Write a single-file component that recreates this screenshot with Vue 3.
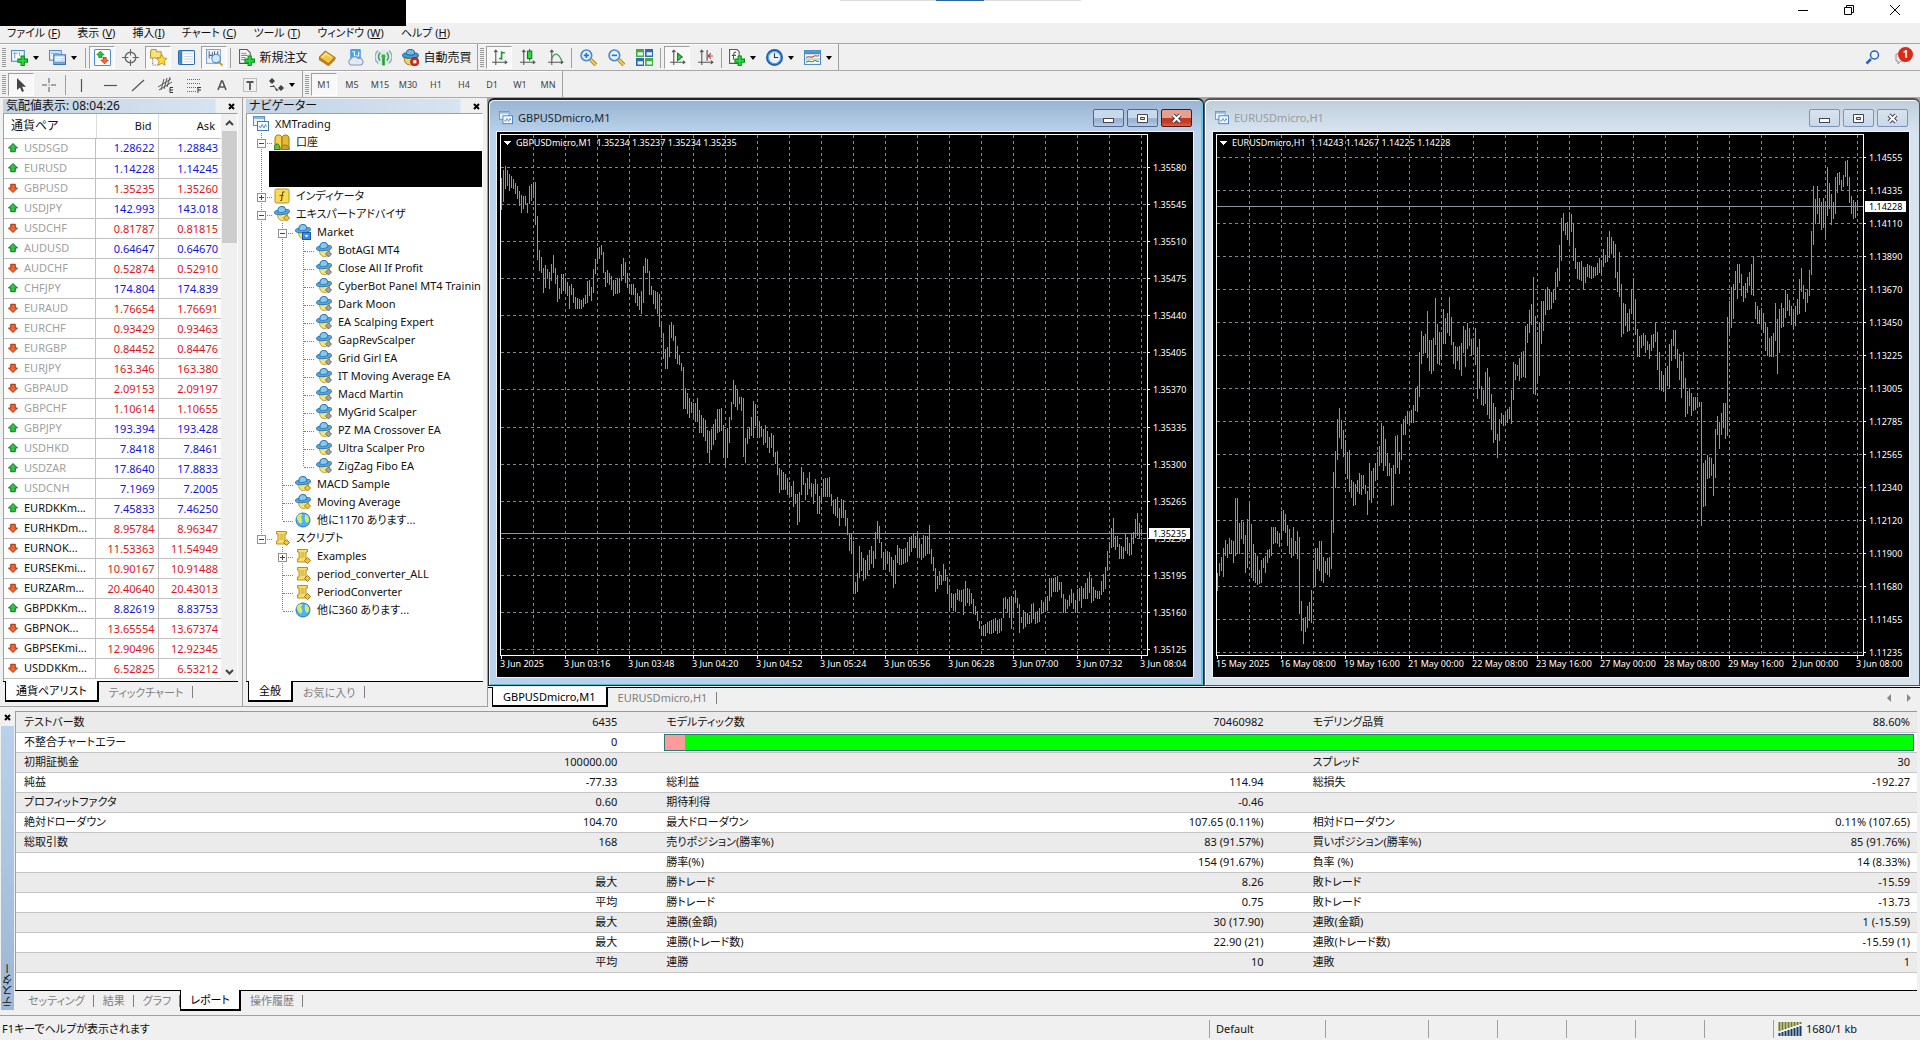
<script setup>
const menus = [
  ['ファイル (', 'F', ')'], ['表示 (', 'V', ')'], ['挿入(', 'I', ')'], ['チャート (', 'C', ')'],
  ['ツール (', 'T', ')'], ['ウィンドウ (', 'W', ')'], ['ヘルプ (', 'H', ')'],
]

const saucer = (gem, edge) => `<path d="M3.500 8c0 4 1.500 6.500 5 6.500s5-3 5-6.500z" fill="#f4e27a" stroke="#b89a2c"/><g transform="rotate(-6 8 6)"><ellipse cx="8" cy="6" rx="7.500" ry="2.500" fill="#5aa9dc" stroke="#2c78b4"/><path d="M4 5.500C4 2 6 .5 8 .5s4 1.500 4 5c-2 1-6 1-8 0z" fill="#86c8ee" stroke="#2c78b4"/></g><path d="M12.500 9l3 3-3 3-3-3z" fill="${gem}" stroke="${edge}"/>`
const axes = '<path d="M4.500 1v14M1 12.500h14M3 3l1.500-2L6 3M13 11l2 1.500-2 1.500" fill="none" stroke="#555"/>'
const plus = '<path d="M9.500 6.500h3v3h3v3h-3v3h-3v-3h-3v-3h3z" fill="#1fe03a" stroke="#0a8a1c"/>'
const lens = '<path d="M10 10l5 5" stroke="#a87a10" stroke-width="3.500"/><path d="M10 10l5 5" stroke="#f2cf52" stroke-width="2"/><circle cx="6" cy="6" r="5" fill="#e3f1fc" stroke="#4489cc" stroke-width="1.500"/>'

const icons = {
  newChart: `<rect x=".5" y="1.500" width="12" height="10" fill="#f4f9ff" stroke="#4a86c0"/><path d="M2 4h4M3.500 3v6M8 3v3" stroke="#7aa9d6"/>${plus}`,
  profiles: '<rect x=".5" y="1.500" width="11" height="9" fill="#eaf4ff" stroke="#4a86c0"/><rect x="4.500" y="5.500" width="11" height="9" fill="#cfe3f7" stroke="#2f6fb2"/><path d="M2 4h8" stroke="#6fa2d4"/><path d="M5 13h10" stroke="#6fa2d4" stroke-width="2"/><path d="M6 8h7M6 10h5" stroke="#fff"/>',
  market: '<rect x=".5" y=".5" width="15" height="15" rx="1" fill="#fff" stroke="#4a90d0"/><path d="M6 2l3.500 3.500H7.500V8h-3V5.500h-2z" fill="#27c93a" stroke="#0c7d1b" stroke-width=".7"/><path d="M10 14l-3.500-3.500h2V8h3v2.500h2z" fill="#f46a34" stroke="#b1310c" stroke-width=".7"/>',
  cross: '<circle cx="8" cy="8" r="5" fill="none" stroke="#666" stroke-width="1.300"/><path d="M8 0v6M8 10v6M0 8h6M10 8h6" stroke="#666"/>',
  navigator: '<path d="M.5 2.500l1-2h4l1 2h4v6h-10z" fill="#f7e27c" stroke="#b9972a"/><path d="M2.500 9v6h5" fill="none" stroke="#777" stroke-dasharray="1 1"/><path d="M11 5l1.600 3.400 3.400.5-2.500 2.500.7 3.800L11 13.500 7.800 15.200l.7-3.800L6 8.900l3.400-.5z" fill="#ffd83c" stroke="#b98a1a" stroke-width=".8"/>',
  terminal: '<rect x=".5" y="1.500" width="15" height="13" rx="1" fill="#fff" stroke="#2c6cb0"/><rect x="1" y="2" width="3" height="12" fill="#3d84cc"/><path d="M6 4.500h8M6 7h8M6 9.500h8M6 12h8" stroke="#c6d9ee"/>',
  tester: '<rect x=".5" y=".5" width="13" height="13" fill="#eef5fc" stroke="#7ea6cd"/><path d="M3 2v7M3 6h3M6 3v5M8 2v4M11 2v5" stroke="#667"/><path d="M12 12l3.500 3.500" stroke="#d2a327" stroke-width="2"/><circle cx="9.500" cy="9" r="4" fill="#cfe6fb" fill-opacity=".85" stroke="#4489cc"/>',
  order: `<path d="M1.500.5h7l3 3v10h-10z" fill="#fff" stroke="#555"/><path d="M3 4h5M3 6h6M3 8h4M3 10h3" stroke="#888"/>${plus}`,
  gold: '<path d="M0 8l6-6 9 6-6 6z" fill="#f2c544" stroke="#a9761a"/><path d="M0 8v2l9 6 6-6V8l-6 6z" fill="#c98a22" stroke="#9a6412" stroke-width=".6"/><path d="M3 8l3.500-3.500L11 7.500" fill="none" stroke="#ffe998"/>',
  cloud: '<rect x="3" y="0" width="10" height="10" rx="1" fill="#45a3ea"/><path d="M5 2.500h2v4h4v-4" stroke="#fff" fill="none"/><path d="M3.500 15a3 3 0 010-5.500 4 4 0 017-.5 3 3 0 012.500 6z" fill="#e2e9f5" stroke="#8697bb"/>',
  signal: '<circle cx="8" cy="8" r="7.500" fill="#dfe9ef"/><path d="M8 8v7.500" stroke="#26a32d" stroke-width="2.500"/><circle cx="8" cy="7" r="2" fill="#3bb44a"/><path d="M5 11a5 5 0 010-7.500M11 11a5 5 0 000-7.500" fill="none" stroke="#3fa854" stroke-width="1.500"/><path d="M3 13.500a7.500 7.500 0 010-12M13 13.500a7.500 7.500 0 000-12" fill="none" stroke="#8fb3c6" stroke-width="1.300"/>',
  auto: '<path d="M2 8c0 4 2 7 6 7s6-3 6-7z" fill="#f4d35a" stroke="#b08a22"/><ellipse cx="8" cy="6" rx="7.500" ry="2.700" fill="#4d9bd3" stroke="#2a6fa5"/><path d="M4 5c0-3 2-4.500 4-4.500S12 2 12 5c-2 1-6 1-8 0z" fill="#74bbe6" stroke="#2a6fa5"/><circle cx="12" cy="12" r="4" fill="#d8281a" stroke="#8e1208" stroke-width=".6"/><rect x="10.500" y="10.500" width="3" height="3" fill="#fff"/>',
  bars: `${axes}<path d="M10 2v8M10 3.500h3M7.500 9h2.500" stroke="#1c9c2a" stroke-width="1.500" fill="none"/>`,
  candles: `${axes}<path d="M10 0v11" stroke="#0a7d18"/><rect x="8" y="2" width="4" height="7" fill="#2fd646" stroke="#0a7d18"/>`,
  line: `${axes}<path d="M4 10c3-7 6-7 10 1" stroke="#3fa34a" fill="none" stroke-width="1.300"/>`,
  zoomIn: `${lens}<path d="M3.500 6h5M6 3.500v5" stroke="#2f74bb" stroke-width="1.500"/>`,
  zoomOut: `${lens}<path d="M3.500 6h5" stroke="#2f74bb" stroke-width="1.500"/>`,
  tile: '<rect x="0" y="0" width="7.500" height="7.500" fill="#3fae3a"/><rect x="8.500" y="0" width="7.500" height="7.500" fill="#2d68b8"/><rect x="0" y="8.500" width="7.500" height="7.500" fill="#2d68b8"/><rect x="8.500" y="8.500" width="7.500" height="7.500" fill="#3fae3a"/><path d="M1.500 4.500h5M10 4.500h5M1.500 13h5M10 13h5" stroke="#e9f4ff" stroke-width="3"/>',
  scroll: `${axes}<path d="M8 4l4.500 3.500L8 11z" fill="#3ccc48" stroke="#138022"/>`,
  shift: `${axes}<path d="M9.500 1v10" stroke="#444"/><path d="M15 6.500h-4M13 4l-2.500 2.500L13 9" stroke="#b8321e" fill="none"/>`,
  indicator: `<path d="M1.500.5h7l2 2v11h-9z" fill="#fff" stroke="#555"/><path d="M7.500 3C5 2.500 5.500 5 5 10M3.500 6h4" stroke="#555" fill="none"/>${plus}`,
  clock: '<circle cx="8" cy="8" r="6.800" fill="#eaf4ff" stroke="#1f5fae" stroke-width="2.400"/><circle cx="8" cy="8" r="5.800" fill="none" stroke="#5aa2e6" stroke-width="1.200"/><path d="M8 4v4h3.500" stroke="#333" fill="none"/>',
  template: '<rect x=".5" y="1.500" width="15" height="13" fill="#fff" stroke="#4a86c0"/><rect x="1" y="2" width="14" height="3" fill="#4a90d6"/><path d="M2 8c3-2 5 1 7-1s3 1 5-1" stroke="#c23a20" fill="none"/><path d="M1 9.500h14" stroke="#9bb" /><path d="M2 12.500c3-3 5 1 7-1s3 1 5 0" stroke="#2a9a38" fill="none"/>',
  pointer: '<path d="M4 1v12l3-2.500L9 15l2-1-2-4.200h4z" fill="#444"/>',
  plusThin: '<path d="M8 1v5M8 10v5M1 8h5M10 8h5" stroke="#555"/><rect x="7.500" y="7.500" width="1" height="1" fill="#555"/>',
  vline: '<path d="M7.500 2v13" stroke="#555" stroke-width="1.200"/>',
  hline: '<path d="M2 8.500h13" stroke="#555" stroke-width="1.200"/>',
  trend: '<path d="M2 14L14 3" stroke="#555" stroke-width="1.200"/>',
  channel: '<path d="M0 10L13 2M1 13l13-8M3 13l3-11M6 12l3-11M9 10l3-10" stroke="#555" fill="none"/><path d="M15 10.500h-3v5h3M12 13h3" stroke="#333" fill="none"/>',
  fibo: '<path d="M1 2.500h13M1 6.500h13M1 10.500h13M1 14.500h9" stroke="#666" stroke-dasharray="1 1"/><path d="M15 10.500h-3V16M12 13h3" stroke="#333" fill="none"/>',
  letter: '<path d="M4 13L7.500 4h1L12 13M5.500 10h5" stroke="#555" stroke-width="1.600" fill="none"/>',
  label: '<rect x="1.500" y="1.500" width="13" height="13" fill="none" stroke="#888" stroke-dasharray="1 1"/><path d="M4.500 5h7M8 5v8" stroke="#555" stroke-width="1.800"/>',
  shapes: '<path d="M4 1l3 3-3 3-3-3z" fill="#444"/><path d="M5 8l4 5M2 9.500h4" stroke="#444"/><path d="M13 8l3 3-3 3-3-3z" fill="#444"/><path d="M7 11l1 3 3-1z" fill="#444"/>',
  windows: '<rect x=".5" y=".5" width="11" height="9" fill="#eaf4ff" stroke="#5b93cb"/><path d="M1 2h10" stroke="#8fb7df" stroke-width="2"/><rect x="4.500" y="5.500" width="11" height="9" fill="#f6faff" stroke="#3e7bbb"/><path d="M6 10l1.500 2L9 8.500l2 3.500 1.500-3.500 1 2" fill="none" stroke="#5b8fc5"/>',
  people: '<path d="M1 15V4c0-4 7-4 7 0v11z" fill="#f6d24a" stroke="#94771a"/><path d="M8 14V4c0-4 7-4 7 0v11z" fill="#e6ba34" stroke="#94771a"/><path d="M0 15.500C0 8 6 8 6 15.500z" fill="#59c043" stroke="#2b7d1c"/><path d="M7 15.500c0-6 8-6 8.500 0z" fill="#c9a02a" stroke="#94771a"/>',
  func: '<rect x="1" y="1" width="14" height="14" rx="1.500" fill="#f9dc53" stroke="#b8912a"/><path d="M10.500 4C8 3.500 8.500 6 7.500 12.500H6M5.500 7.500h4" stroke="#6b5310" fill="none" stroke-width="1.200"/>',
  ea: saucer('#f3c33a', '#a87a14'),
  eaGray: saucer('#a2a2a2', '#6c6c6c'),
  eaMarket: saucer('#5aa9dc', '#2c78b4') + '<rect x="7.500" y="8.500" width="8" height="7" fill="#3c8be0" stroke="#1c5ba8"/><path d="M9.500 11l2 2.500 2-2.500z" fill="#fff"/>',
  globe: '<circle cx="8" cy="8" r="7" fill="#4fb2ee" stroke="#2a78b8"/><path d="M2.500 4c2-3 5-2 5-1s-2 1-1 3 1 3 0 5-3-1-4-3-1-3 0-4zM10 2.500c3 0 4.500 4 4 6S11 12 10.500 9 9 6 10 5z" fill="#d4ec6a"/>',
  script: '<path d="M2.500 1.500h10V4H11v7h1.500v3h-10v-3H4V4H2.500z" fill="#f8dd66" stroke="#b58f25"/><path d="M5.500 5h4M5.500 7h4M5.500 9h4" stroke="#c9a53a"/><path d="M12.500 9.500l3 3-3 3-3-3z" fill="#f3c33a" stroke="#a87a14"/>',
  up: '<path d="M8 2l6 6h-3v5H5V8H2z" fill="#2fc344" stroke="#0c6e1c" stroke-width="1.300"/>',
  down: '<path d="M8 14l6-6h-3V3H5v5H2z" fill="#f4652f" stroke="#9c2f0c" stroke-width="1.300"/>',
}

const barA = [
  { i: 'newChart', d: 1 }, { i: 'profiles', d: 1 }, { s: 1 },
  { i: 'market', p: 1 }, { i: 'cross' }, { i: 'navigator', p: 1 }, { i: 'terminal' }, { i: 'tester', p: 1 }, { s: 1 },
  { i: 'order', t: '新規注文' }, { i: 'gold' }, { i: 'cloud' }, { i: 'signal' }, { i: 'auto', t: '自動売買' },
]
const barB = [
  { i: 'bars', p: 1 }, { i: 'candles' }, { i: 'line' }, { s: 1 },
  { i: 'zoomIn' }, { i: 'zoomOut' }, { i: 'tile' }, { s: 1 },
  { i: 'scroll', p: 1 }, { i: 'shift' }, { s: 1 },
  { i: 'indicator', d: 1 }, { i: 'clock', d: 1 }, { i: 'template', d: 1 },
]
const barC = [
  { i: 'pointer', p: 1 }, { i: 'plusThin' }, { s: 1 },
  { i: 'vline' }, { i: 'hline' }, { i: 'trend' }, { i: 'channel' }, { i: 'fibo' }, { i: 'letter' }, { i: 'label' }, { i: 'shapes', d: 1 },
]
const frames = ['M1', 'M5', 'M15', 'M30', 'H1', 'H4', 'D1', 'W1', 'MN']

const quotes = `USDSGD u 1.28622 1.28843 g
EURUSD u 1.14228 1.14245 g
GBPUSD d 1.35235 1.35260 g
USDJPY u 142.993 143.018 g
USDCHF d 0.81787 0.81815 g
AUDUSD u 0.64647 0.64670 g
AUDCHF d 0.52874 0.52910 g
CHFJPY u 174.804 174.839 g
EURAUD d 1.76654 1.76691 g
EURCHF d 0.93429 0.93463 g
EURGBP d 0.84452 0.84476 g
EURJPY d 163.346 163.380 g
GBPAUD d 2.09153 2.09197 g
GBPCHF d 1.10614 1.10655 g
GBPJPY u 193.394 193.428 g
USDHKD u 7.8418 7.8461 g
USDZAR u 17.8640 17.8833 g
USDCNH u 7.1969 7.2005 g
EURDKKm... u 7.45833 7.46250
EURHKDm... d 8.95784 8.96347
EURNOK... d 11.53363 11.54949
EURSEKmi... d 10.90167 10.91488
EURZARm... d 20.40640 20.43013
GBPDKKm... u 8.82619 8.83753
GBPNOK... d 13.65554 13.67374
GBPSEKmi... d 12.90496 12.92345
USDDKKm... d 6.52825 6.53212`.split('\n').map((l) => {
  const [name, dir, bid, ask, gray] = l.split(' ')
  return { name, up: dir === 'u', bid, ask, gray: !!gray }
})

/* guide cells: | line, T branch, L last branch, - open node, + closed node, e open last */
const ea = (name) => ({ g: '||T', i: 'eaGray', t: name })
const treeTop = [
  { g: '', i: 'windows', t: 'XMTrading' },
  { g: '-', i: 'people', t: '口座' },
]
const treeRest = [
  { g: '+', i: 'func', t: 'インディケータ' },
  { g: '-', i: 'ea', t: 'エキスパートアドバイザ' },
  { g: '|-', i: 'eaMarket', t: 'Market' },
  ea('BotAGI MT4'), ea('Close All If Profit'), ea('CyberBot Panel MT4 Trainin'), ea('Dark Moon'),
  ea('EA Scalping Expert'), ea('GapRevScalper'), ea('Grid Girl EA'), ea('IT Moving Average EA'),
  ea('Macd Martin'), ea('MyGrid Scalper'), ea('PZ MA Crossover EA'), ea('Ultra Scalper Pro'),
  { g: '||L', i: 'eaGray', t: 'ZigZag Fibo EA' },
  { g: '|T', i: 'ea', t: 'MACD Sample' },
  { g: '|T', i: 'ea', t: 'Moving Average' },
  { g: '|L', i: 'globe', t: '他に1170 あります...' },
  { g: 'e', i: 'script', t: 'スクリプト' },
  { g: ' +', i: 'script', t: 'Examples' },
  { g: ' T', i: 'script', t: 'period_converter_ALL' },
  { g: ' T', i: 'script', t: 'PeriodConverter' },
  { g: ' L', i: 'globe', t: '他に360 あります...' },
]
const cellClass = {
  '|': 'v', T: 'v h', L: 'half h', '-': 'v h box', '+': 'v h box plus', e: 'half h box', ' ': '',
}

/* range bars: x, high, low in plot pixels */
const gbp = `1,44,75;4,32,63;6,32,44;8,39,58;10,41,53;13,45,54;17,52,64;21,61,78;25,62,69;27,69,78;29,52,69;33,48,62;35,48,90;37,82,125;39,116,136;41,123,138;43,134,158;45,131,153;47,135,144;49,138,154;53,121,138;55,134,149;57,141,167;59,154,164;61,140,159;63,140,156;65,144,158;67,148,161;69,152,174;71,150,160;73,154,168;75,163,174;81,166,174;85,161,169;87,147,168;89,146,161;91,153,166;93,135,158;95,125,139;97,114,128;101,111,120;103,118,138;105,138,152;107,136,148;109,139,150;111,142,155;113,146,161;115,146,159;119,144,158;121,130,146;123,124,141;125,128,148;127,139,153;129,150,159;133,150,160;135,154,168;137,159,171;139,162,175;141,157,179;143,132,168;145,124,138;147,125,138;149,137,160;151,152,160;153,156,169;157,158,179;159,160,192;161,190,203;163,199,224;165,215,234;167,213,234;169,191,222;171,188,203;173,191,206;175,202,224;177,212,229;179,221,230;181,229,236;183,233,274;185,254,274;189,264,283;191,268,278;195,269,287;197,264,287;199,276,298;201,281,298;205,286,306;207,296,318;209,297,328;211,295,315;215,285,305;217,275,298;221,274,296;223,291,323;225,297,330;227,294,323;229,283,308;231,268,285;233,246,269;235,251,272;237,256,275;239,263,269;241,263,276;243,264,322;245,304,328;247,295,309;249,293,304;251,283,301;253,267,303;255,270,291;257,282,303;261,292,302;263,295,310;265,291,308;269,303,318;271,299,313;273,301,322;275,318,329;277,317,340;279,334,358;281,336,355;285,340,355;287,344,360;291,352,362;293,347,372;295,360,369;297,360,390;299,358,387;301,333,360;303,338,350;305,349,365;309,338,354;311,349,362;313,350,369;315,345,359;317,350,379;319,362,379;321,354,369;323,345,362;329,343,362;331,360,371;333,366,379;337,363,383;339,374,391;341,365,383;343,366,383;345,376,391;347,384,400;349,399,416;351,400,419;353,407,459;355,448,459;357,439,457;359,412,443;361,418,436;363,424,446;365,426,444;369,416,435;371,412,429;373,417,433;375,398,424;377,387,404;379,392,408;381,408,423;383,418,435;387,417,429;389,418,437;391,423,441;393,426,453;395,421,449;397,411,428;399,414,430;403,415,429;405,414,428;407,408,427;409,403,421;413,400,413;415,402,413;417,400,421;419,404,423;421,410,425;423,401,423;427,402,419;429,391,419;431,415,429;433,423,436;435,434,457;437,442,454;439,437,450;441,441,450;443,430,446;445,435,446;447,443,459;449,454,476;451,459,473;453,460,476;455,459,477;457,455,465;461,456,467;463,455,480;465,447,471;467,454,468;469,455,471;471,459,469;473,465,479;475,472,480;477,477,486;479,487,494;481,492,500;485,490,501;487,488,498;489,487,499;493,485,498;495,484,496;497,486,499;501,484,496;503,464,483;505,463,474;507,465,477;509,463,483;511,462,494;513,463,483;515,456,468;517,464,473;519,470,498;521,483,488;523,476,494;527,479,489;529,481,489;531,470,488;533,469,484;535,479,489;539,474,487;541,466,479;543,468,478;547,462,476;549,444,466;553,444,457;557,442,457;559,448,455;561,448,463;563,460,478;565,465,478;567,466,474;571,455,468;573,459,474;575,466,478;577,455,477;579,454,466;581,452,473;583,454,464;587,444,464;589,438,458;591,444,468;593,453,466;595,456,463;599,457,464;601,447,460;605,433,454;607,417,436;609,408,418;611,394,413;613,384,412;615,402,415;617,402,412;619,410,424;623,413,424;625,399,416;627,403,419;629,409,421;631,400,420;633,398,409;635,385,403;637,379,401;639,389,403;641,395,401`
const eur = `1,439,456;3,429,441;5,423,436;7,414,442;9,406,421;11,410,423;13,404,418;15,406,419;17,407,428;19,364,421;21,364,419;23,389,419;25,386,404;27,388,409;29,401,438;31,385,433;33,370,414;35,390,443;37,410,446;39,420,448;41,422,450;43,436,449;45,426,448;47,424,433;49,422,438;51,416,428;53,415,423;55,393,421;57,393,409;59,393,408;61,397,409;63,399,412;65,377,404;67,376,396;69,380,398;71,391,411;73,395,419;75,404,423;77,393,421;79,407,419;81,397,424;83,403,479;85,467,496;87,484,509;89,483,497;91,472,493;93,468,486;95,456,488;97,426,453;99,414,451;101,414,434;103,407,436;105,407,446;107,423,448;109,427,438;111,424,440;113,423,442;115,386,434;117,338,398;119,317,353;121,285,325;123,274,303;125,286,314;127,296,322;129,306,339;131,318,344;133,316,357;135,346,363;137,348,371;139,350,370;141,346,357;143,339,359;145,341,360;147,341,354;149,351,359;151,357,380;153,329,365;155,337,368;157,334,363;159,329,346;161,318,344;163,312,331;165,289,328;167,292,336;169,305,331;171,319,341;173,329,341;175,334,371;177,331,370;179,302,339;181,301,333;183,318,339;185,290,325;187,285,300;189,282,300;191,277,289;193,279,290;195,276,288;197,271,288;199,254,276;201,252,277;203,218,262;205,197,229;207,202,219;209,200,218;211,177,223;213,206,236;215,206,239;217,204,236;219,164,210;221,190,229;223,198,230;225,198,224;227,175,209;229,184,209;231,179,198;233,163,201;235,183,210;237,208,229;239,212,234;241,213,226;243,212,235;245,209,241;247,192,218;249,196,232;251,189,214;253,194,211;255,205,221;257,204,220;259,194,230;261,213,264;263,205,254;265,252,270;267,256,271;269,238,269;271,234,280;273,243,284;275,260,295;277,269,308;279,273,305;281,300,323;283,285,306;285,279,289;287,281,291;289,280,290;291,275,288;293,273,284;295,256,289;297,228,265;299,230,245;301,231,241;303,224,246;305,218,243;307,217,242;309,192,243;311,190,208;313,176,198;315,170,190;317,143,259;319,182,260;321,198,248;323,188,241;325,167,209;327,167,196;329,155,180;331,153,175;335,158,174;337,156,168;339,138,165;341,134,152;343,111,146;345,84,126;347,79,96;349,89,100;351,88,105;353,78,108;355,80,97;357,89,126;359,114,134;361,128,144;365,127,146;367,133,155;369,133,148;371,130,142;375,132,144;379,133,141;383,124,138;385,126,141;387,115,132;389,121,128;391,103,127;393,97,123;395,103,119;397,107,123;399,110,143;401,138,157;403,118,162;405,150,202;407,169,199;409,170,191;411,179,197;413,175,196;415,155,179;417,144,185;419,165,200;421,195,222;423,202,222;425,201,213;427,199,211;429,201,218;431,207,215;433,210,224;435,201,216;437,200,213;439,189,207;441,198,235;443,218,255;445,237,256;447,241,257;449,234,267;451,232,251;453,210,253;455,205,226;457,196,211;459,196,224;461,215,233;463,220,245;465,227,263;467,218,254;469,244,282;471,257,279;473,254,271;475,259,281;477,263,276;481,263,273;483,268,272;485,268,391;487,329,372;489,326,371;491,321,344;493,323,343;495,324,341;497,330,361;499,295,343;501,282,300;503,288,314;505,279,300;507,269,293;509,269,304;511,183,301;513,167,199;515,153,193;517,150,184;519,137,155;521,130,164;523,130,148;525,140,161;527,152,167;529,149,163;531,143,158;533,138,151;535,130,160;537,123,161;539,168,184;541,172,189;543,176,189;545,174,193;547,179,198;549,189,216;551,193,221;553,204,222;557,199,222;559,169,206;561,185,239;563,175,218;565,169,193;567,174,192;569,156,183;571,160,176;573,166,181;575,172,190;577,178,194;579,172,191;581,165,180;583,145,179;585,134,157;587,151,164;589,158,177;591,156,168;593,136,161;595,97,140;597,52,110;599,65,89;601,52,79;603,64,89;605,68,95;607,64,93;609,68,104;611,33,81;613,49,74;615,60,90;617,68,84;619,43,79;621,39,58;623,38,50;625,46,56;627,41,52;629,27,42;631,26,51;633,43,68;635,62,79;637,66,84;639,68,83;641,66,76`

function barPath(src) {
  const pts = src.split(';').map((p) => p.split(',').map(Number))
  let out = ''
  let k = 0
  for (let x = 1; x <= 641; x += 2) {
    while (k < pts.length - 2 && pts[k + 1][0] <= x) k++
    const [x0, h0, l0] = pts[k]
    const [x1, h1, l1] = pts[k + 1]
    const f = Math.min(1, Math.max(0, (x - x0) / (x1 - x0)))
    const hi = Math.round(h0 + (h1 - h0) * f)
    const lo = Math.round(l0 + (l1 - l0) * f)
    out += `M${x + 3}.5 ${hi + 2}V${lo + 3}`
  }
  return out
}

const charts = [
  {
    title: 'GBPUSDmicro,M1', active: true, info: 'GBPUSDmicro,M1  1.35234 1.35237 1.35234 1.35235',
    path: barPath(gbp), y0: 35, step: 37.08, now: 401, nowText: '1.35235',
    prices: ['1.35580', '1.35545', '1.35510', '1.35475', '1.35440', '1.35405', '1.35370', '1.35335', '1.35300', '1.35265', '1.35230', '1.35195', '1.35160', '1.35125'],
    times: ['3 Jun 2025', '3 Jun 03:16', '3 Jun 03:48', '3 Jun 04:20', '3 Jun 04:52', '3 Jun 05:24', '3 Jun 05:56', '3 Jun 06:28', '3 Jun 07:00', '3 Jun 07:32', '3 Jun 08:04'],
  },
  {
    title: 'EURUSDmicro,H1', active: false, info: 'EURUSDmicro,H1  1.14243 1.14267 1.14225 1.14228',
    path: barPath(eur), y0: 25, step: 33.03, now: 74, nowText: '1.14228',
    prices: ['1.14555', '1.14335', '1.14110', '1.13890', '1.13670', '1.13450', '1.13225', '1.13005', '1.12785', '1.12565', '1.12340', '1.12120', '1.11900', '1.11680', '1.11455', '1.11235'],
    times: ['15 May 2025', '16 May 08:00', '19 May 16:00', '21 May 00:00', '22 May 08:00', '23 May 16:00', '27 May 00:00', '28 May 08:00', '29 May 16:00', '2 Jun 00:00', '3 Jun 08:00'],
  },
]
const rowY = (c, i) => Math.round(c.y0 + c.step * i)
const gridX = Array.from({ length: 20 }, (_, i) => 36 + 32 * i)

const report = [
  ['テストバー数', '6435', 'モデルティック数', '70460982', 'モデリング品質', '88.60%'],
  ['不整合チャートエラー', '0', null],
  ['初期証拠金', '100000.00', '', '', 'スプレッド', '30'],
  ['純益', '-77.33', '総利益', '114.94', '総損失', '-192.27'],
  ['プロフィットファクタ', '0.60', '期待利得', '-0.46', '', ''],
  ['絶対ドローダウン', '104.70', '最大ドローダウン', '107.65 (0.11%)', '相対ドローダウン', '0.11% (107.65)'],
  ['総取引数', '168', '売りポジション(勝率%)', '83 (91.57%)', '買いポジション(勝率%)', '85 (91.76%)'],
  ['', '', '勝率(%)', '154 (91.67%)', '負率 (%)', '14 (8.33%)'],
  ['', '最大', '勝トレード', '8.26', '敗トレード', '-15.59'],
  ['', '平均', '勝トレード', '0.75', '敗トレード', '-13.73'],
  ['', '最大', '連勝(金額)', '30 (17.90)', '連敗(金額)', '1 (-15.59)'],
  ['', '最大', '連勝(トレード数)', '22.90 (21)', '連敗(トレード数)', '-15.59 (1)'],
  ['', '平均', '連勝', '10', '連敗', '1'],
]
const testerTabs = ['セッティング', '結果', 'グラフ', 'レポート', '操作履歴']
</script>

<template>
  <div class="app">
    <header class="titlebar">
      <div class="mask-title"></div>
      <div class="top-mark"><i></i></div>
      <div class="win-controls">
        <button aria-label="最小化"><svg width="12" height="12"><path d="M1 6.500h10" stroke="#000" /></svg></button>
        <button aria-label="元に戻す"><svg width="12" height="12"><path d="M1.500 3.500h7v7h-7zM3.500 3.500v-2h7v7h-2" fill="none" stroke="#000" /></svg></button>
        <button aria-label="閉じる"><svg width="12" height="12"><path d="M1 1l10 10M11 1L1 11" stroke="#000" /></svg></button>
      </div>
    </header>

    <nav class="menubar">
      <button v-for="m in menus" :key="m[0]">{{ m[0] }}<u>{{ m[1] }}</u>{{ m[2] }}</button>
    </nav>

    <div class="toolrow">
      <div v-for="(bar, b) in [barA, barB]" :key="b" class="toolbar">
        <i class="grip"></i>
        <template v-for="(it, k) in bar" :key="k">
          <i v-if="it.s" class="sep"></i>
          <button v-else class="tool" :class="{ pressed: it.p, drop: it.d, wide: it.t }" :aria-label="it.t || it.i">
            <svg width="17" height="17" viewBox="0 0 16 16" v-html="icons[it.i]"></svg>
            <span v-if="it.t">{{ it.t }}</span>
            <i v-if="it.d" class="caret"></i>
          </button>
        </template>
      </div>
      <div class="tool-right">
        <button aria-label="検索"><svg width="16" height="16" viewBox="0 0 16 16"><path d="M6 10l-4.500 4.500" stroke="#2b62b8" stroke-width="2.500" /><circle cx="9.500" cy="6" r="4" fill="#eef5ff" stroke="#2b62b8" stroke-width="1.500" /></svg></button>
        <button class="bell" aria-label="通知">
          <svg width="20" height="18" viewBox="0 0 20 18"><path d="M3 6h11v7H8l-3 3v-3H3z" fill="#e8e8e8" stroke="#999" /></svg>
          <b>1</b>
        </button>
      </div>
    </div>

    <div class="toolrow">
      <div class="toolbar">
        <i class="grip"></i>
        <template v-for="(it, k) in barC" :key="k">
          <i v-if="it.s" class="sep"></i>
          <button v-else class="tool" :class="{ pressed: it.p, drop: it.d }" :aria-label="it.i">
            <svg width="16" height="16" viewBox="0 0 16 16" v-html="icons[it.i]"></svg>
            <i v-if="it.d" class="caret"></i>
          </button>
        </template>
      </div>
      <div class="toolbar">
        <i class="grip"></i>
        <button v-for="f in frames" :key="f" class="tool frame" :class="{ pressed: f === 'M1' }">{{ f }}</button>
      </div>
    </div>

    <main class="workspace">
      <section class="panel watch">
        <div class="panel-title"><span>気配値表示: 08:04:26</span><button aria-label="閉じる"><svg width="7" height="7"><path d="M1 1l5 5M6 1L1 6" stroke="#000" stroke-width="2" /></svg></button></div>
        <div class="watch-body">
          <table class="quotes">
            <thead><tr><th>通貨ペア</th><th>Bid</th><th>Ask</th></tr></thead>
            <tbody>
              <tr v-for="q in quotes" :key="q.name" :class="q.up ? 'up' : 'down'">
                <td :class="{ gray: q.gray }"><svg width="12" height="12" viewBox="0 0 16 16" v-html="icons[q.up ? 'up' : 'down']"></svg>{{ q.name }}</td>
                <td>{{ q.bid }}</td>
                <td>{{ q.ask }}</td>
              </tr>
            </tbody>
          </table>
          <div class="scroll">
            <svg width="9" height="6"><path d="M1 5l3.500-3.500L8 5" fill="none" stroke="#444" stroke-width="2" /></svg>
            <div class="thumb"></div>
            <svg width="9" height="6"><path d="M1 1l3.500 3.500L8 1" fill="none" stroke="#444" stroke-width="2" /></svg>
          </div>
        </div>
        <div class="tabs"><button class="on">通貨ペアリスト</button><button>ティックチャート</button></div>
      </section>

      <section class="panel navi">
        <div class="panel-title"><span>ナビゲーター</span><button aria-label="閉じる"><svg width="7" height="7"><path d="M1 1l5 5M6 1L1 6" stroke="#000" stroke-width="2" /></svg></button></div>
        <div class="tree">
          <div v-for="n in treeTop" :key="n.t" class="node">
            <i v-for="(c, k) in n.g" :key="k" class="guide" :class="cellClass[c]"></i>
            <svg width="16" height="16" viewBox="0 0 16 16" v-html="icons[n.i]"></svg><span>{{ n.t }}</span>
          </div>
          <div class="hidden-account"><i class="guide v"></i><div></div></div>
          <div v-for="(n, r) in treeRest" :key="r" class="node">
            <i v-for="(c, k) in n.g" :key="k" class="guide" :class="cellClass[c]"></i>
            <svg width="16" height="16" viewBox="0 0 16 16" v-html="icons[n.i]"></svg><span>{{ n.t }}</span>
          </div>
        </div>
        <div class="tabs"><button class="on">全般</button><button>お気に入り</button></div>
      </section>

      <section class="charts">
        <div class="mdi">
          <article v-for="c in charts" :key="c.title" class="chart-window" :class="{ active: c.active }">
            <div class="chart-title">
              <svg width="14" height="14" viewBox="0 0 16 16" v-html="icons.windows"></svg>
              <span>{{ c.title }}</span>
              <button aria-label="最小化"><svg width="13" height="11"><rect x="1.500" y="5.500" width="10" height="4" fill="#fff" stroke="#445" /></svg></button>
              <button aria-label="最大化"><svg width="13" height="11"><path d="M1.500 1.500h10v8h-10z" fill="#fff" stroke="#445" /><path d="M4.500 4.500h4v2h-4z" fill="#dde" stroke="#445" /></svg></button>
              <button class="x" aria-label="閉じる"><svg width="13" height="11"><path d="M3 2l7 7M10 2L3 9" stroke="#445" stroke-width="4" /><path d="M3 2l7 7M10 2L3 9" stroke="#fff" stroke-width="2" /></svg></button>
            </div>
            <svg class="plot" viewBox="0 0 696 545">
              <rect width="696" height="545" fill="#000" />
              <g stroke="#7c8896" stroke-dasharray="3 3">
                <path v-for="x in gridX" :key="x" :d="`M${x}.5 3V523`" />
                <path v-for="(p, i) in c.prices" :key="p" :d="`M4 ${rowY(c, i)}.5H650`" />
              </g>
              <path :d="`M4 ${c.now}.5H650`" stroke="#8d95a0" />
              <path :d="c.path" stroke="#2fdc2f" />
              <path d="M3.500 523V2.500H650.500V523.500H3" fill="none" stroke="#fff" />
              <path d="M7 9h7l-3.500 4z" fill="#fff" />
              <text x="19" y="14" class="info" xml:space="preserve">{{ c.info }}</text>
              <g v-for="(p, i) in c.prices" :key="p">
                <path :d="`M650 ${rowY(c, i)}.5h3`" stroke="#fff" />
                <text x="656" :y="rowY(c, i) + 4">{{ p }}</text>
              </g>
              <g v-for="(t, i) in c.times" :key="t">
                <path :d="`M${4 + 64 * i}.500 523v4`" stroke="#fff" />
                <text :x="3 + 64 * i" y="535">{{ t }}</text>
              </g>
              <rect x="652" :y="c.now - 5" width="41" height="11" fill="#fff" />
              <text x="656" :y="c.now + 4" class="now">{{ c.nowText }}</text>
            </svg>
          </article>
        </div>
        <div class="tabs chart-tabs">
          <button class="on">GBPUSDmicro,M1</button><button>EURUSDmicro,H1</button>
          <div class="pager"><svg width="5" height="8"><path d="M4 0L0 4l4 4z" fill="#888" /></svg><svg width="5" height="8"><path d="M1 0l4 4-4 4z" fill="#888" /></svg></div>
        </div>
      </section>
    </main>

    <section class="tester">
      <aside>
        <button aria-label="閉じる"><svg width="7" height="7"><path d="M1 1l5 5M6 1L1 6" stroke="#000" stroke-width="2" /></svg></button>
        <span>テスター</span>
      </aside>
      <div class="tester-main">
        <div class="report-box">
          <table class="report">
            <colgroup><col class="c1"><col class="c1"><col class="c2"><col class="c2"><col class="c2"><col class="c2"></colgroup>
            <tbody>
              <tr v-for="(r, i) in report" :key="i">
                <template v-if="r[2] === null">
                  <td>{{ r[0] }}</td><td>{{ r[1] }}</td>
                  <td colspan="4" class="quality"><div><i></i></div></td>
                </template>
                <template v-else><td v-for="(v, k) in r" :key="k">{{ v }}</td></template>
              </tr>
            </tbody>
          </table>
        </div>
        <div class="tabs"><button v-for="t in testerTabs" :key="t" :class="{ on: t === 'レポート' }">{{ t }}</button></div>
      </div>
    </section>

    <footer class="status">
      <span class="hint">F1キーでヘルプが表示されます</span>
      <span class="s1">Default</span><span class="s2"></span><span class="s3"></span><span class="s3"></span><span class="s3"></span><span class="s3"></span><span class="s3"></span>
      <span class="net">
        <svg width="24" height="14"><path d="M1.500 0v9M4.500 0v8M7.500 0v7M10.500 0v6M13.500 0v5M16.500 0v4M19.500 0v3M22.500 0v2" stroke="#6f7d1e" stroke-width="2" /><path d="M1.500 11v3M4.500 10v4M7.500 9v5M10.500 8v6M13.500 7v7M16.500 6v8M19.500 5v9M22.500 4v10" stroke="#123f63" stroke-width="2" /></svg>
        1680/1 kb
      </span>
    </footer>
  </div>
</template>

<style>
body { margin: 0; background: #f0f0f0; }
</style>

<style scoped>
.app {
  min-height: 100vh;
  display: flex;
  flex-direction: column;
  background: #f0f0f0;
  color: #111;
  font: 11px/18px "Noto Sans", "Noto Sans CJK JP", sans-serif;
  font-feature-settings: "palt";
}
.app, .app *, .app *::before, .app *::after { box-sizing: border-box; }
button {
  font: inherit;
  font-feature-settings: inherit;
  color: inherit;
  background: none;
  border: 0;
  padding: 0;
  margin: 0;
}
svg { display: block; flex: none; }

.titlebar { position: relative; height: 23px; background: #fff; display: flex; justify-content: flex-end; }
.mask-title { position: absolute; left: 0; top: 0; width: 406px; height: 26px; background: #000; z-index: 2; }
.top-mark { position: absolute; left: 840px; top: 0; width: 241px; height: 1px; background: #ddd; }
.top-mark i { display: block; margin-left: 96px; width: 48px; height: 1px; background: #2a65a8; }
.win-controls { display: flex; padding-right: 2px; }
.win-controls button { width: 46px; height: 20px; display: flex; align-items: center; justify-content: center; }

.menubar { height: 20px; display: flex; gap: 17px; padding: 0 7px; }

.toolrow { height: 27px; display: flex; border-top: 1px solid #a8a8a8; }
.toolbar {
  display: flex;
  align-items: center;
  gap: 2px;
  padding: 1px 1px 0 2px;
  border-right: 1px solid #a0a0a0;
  box-shadow: inset 0 1px #fff, 0 1px #a8a8a8;
}
.grip { width: 4px; height: 20px; background: repeating-linear-gradient(#9a9a9a 0 1px, #f0f0f0 1px 2px); }
.sep { width: 1px; height: 20px; background: #a0a0a0; margin: 0 1px; }
.tool { width: 26px; height: 23px; display: flex; align-items: center; justify-content: center; border: 1px solid transparent; color: #444; }
.tool.pressed { background: #f8f8f8; border-color: #a0a0a0 #fff #fff #a0a0a0; }
.tool.drop { width: 36px; justify-content: flex-start; gap: 5px; padding-left: 2px; }
.tool.wide { width: 78px; gap: 4px; font-size: 12px; color: #111; }
.tool.frame { font-size: 9px; }
.caret { border: 3px solid transparent; border-top: 4px solid #000; border-bottom: 0; }
.tool-right { margin-left: auto; display: flex; align-items: center; gap: 12px; padding-right: 7px; }
.bell { position: relative; }
.bell b {
  position: absolute;
  right: 0;
  top: -1px;
  width: 15px;
  height: 15px;
  border-radius: 50%;
  background: #d9281c;
  color: #fff;
  font-size: 10px;
  line-height: 15px;
}

.workspace { display: flex; align-items: stretch; border-top: 1px solid #a8a8a8; }
.panel { display: flex; flex-direction: column; flex: none; border-right: 1px solid #a0a0a0; border-bottom: 1px solid #a0a0a0; padding: 1px 4px 4px 3px; }
.watch { width: 243px; }
.navi { width: 245px; }
.panel-title {
  display: flex;
  align-items: center;
  justify-content: space-between;
  height: 14px;
  padding: 0 0 0 3px;
  background: linear-gradient(90deg, #c3d3e4, #d6e4f2 90%, #f0f0f0 91%);
  font-size: 12px;
  line-height: 14px;
}
.panel-title button { padding: 3px; }
.watch-body { display: flex; flex: 1; border: 1px solid #a0a0a0; border-right-color: #fff; border-bottom: 0; background: #fff; }
.quotes { border-collapse: collapse; flex: 1; table-layout: fixed; align-self: flex-start; }
.quotes th { height: 24px; font-weight: 400; text-align: right; padding: 0 6px 0 0; border-right: 1px solid #ddd; border-bottom: 1px solid #c0c0c0; }
.quotes th:first-child { width: 92px; text-align: left; padding-left: 7px; font-size: 12px; }
.quotes th:nth-child(2) { width: 62px; }
.quotes td { height: 20px; padding: 0 3px 0 0; line-height: 18px; text-align: right; border-right: 1px solid #c0c0c0; border-bottom: 1px solid #c0c0c0; white-space: nowrap; }
.quotes tr > :last-child { border-right: 0; }
.quotes td:first-child { display: flex; align-items: center; gap: 5px; padding-left: 3px; color: #111; }
.quotes td.gray:first-child { color: #a0a0a0; }
.up td { color: #1414dc; }
.down td { color: #e01420; }
.scroll { width: 16px; background: #f0f0f0; display: flex; flex-direction: column; align-items: center; padding: 6px 0 6px; }
.thumb { width: 15px; height: 112px; background: #cdcdcd; margin: 5px 0 auto; }

.tabs { display: flex; height: 21px; border-top: 1px solid #000; padding-left: 2px; color: #808080; }
.tabs button { position: relative; padding: 0 10px; line-height: 17px; white-space: nowrap; }
.tabs button:not(.on)::after { content: ""; position: absolute; right: 0; top: 4px; height: 12px; border-right: 1px solid #808080; }
.tabs .on { background: #fff; color: #000; border: 1px solid #000; border-width: 0 2px 2px 1px; margin-top: -1px; }

.tree { flex: 1; min-height: 0; background: #fff; border: 1px solid #a0a0a0; border-right-color: #fff; border-bottom: 0; padding: 1px 0 0 4px; overflow: hidden; }
.node { display: flex; height: 18px; align-items: center; white-space: nowrap; line-height: 18px; }
.node svg { margin: 0 6px 0 2px; }
.guide { position: relative; flex: none; width: 21px; align-self: stretch; }
.guide.v { background: repeating-linear-gradient(#808080 0 1px, transparent 1px 2px) 10px 0 / 1px 100% no-repeat; }
.guide.half { background: repeating-linear-gradient(#808080 0 1px, transparent 1px 2px) 10px 0 / 1px 50% no-repeat; }
.guide.h::before { content: ""; position: absolute; left: 11px; right: 0; top: 10px; border-top: 1px dotted #808080; }
.guide.box::after { content: ""; position: absolute; left: 6px; top: 6px; width: 9px; height: 9px; border: 1px solid #919191; background: linear-gradient(#444, #444) center / 5px 1px no-repeat, #fff; }
.guide.plus::after { background: linear-gradient(#444, #444) center / 5px 1px no-repeat, linear-gradient(#444, #444) center / 1px 5px no-repeat, #fff; }
.hidden-account { display: flex; height: 36px; }
.hidden-account div { flex: 1; background: #000; margin: 0 0 0 -3px; }

.charts { flex: 1; min-width: 0; display: flex; flex-direction: column; }
.mdi { display: flex; background: #a5a5a5; }
.chart-window {
  flex: 1;
  min-width: 0;
  padding: 0 10px 8px 8px;
  border: 1px solid #555;
  border-top-width: 2px;
  border-radius: 6px 6px 0 0;
  background: linear-gradient(#c0cedb, #d7e4f0 32px);
  box-shadow: inset 1px 1px #fff;
}
.chart-window.active { border-color: #222; background: linear-gradient(#99b4d1, #b9d1ea 32px); box-shadow: inset 1px 1px #e6f2ff, inset -2px 0 #5fc8ee, inset 0 -1px #5fb8c8; }
.chart-title { display: flex; align-items: center; gap: 3px; height: 32px; padding: 4px 1px 0 2px; color: #9a9a9a; }
.chart-title span { flex: 1; margin-left: 2px; }
.chart-title button { width: 31px; height: 18px; display: flex; align-items: center; justify-content: center; border: 1px solid #7f93b8; border-radius: 2px; background: linear-gradient(#d8e3ef, #c9d8e8); }
.active .chart-title { color: #1c2733; }
.active .chart-title button { border-color: #52658a; background: linear-gradient(#c9d9ec 0 50%, #9db5d2 50% 70%, #b7cde6); }
.active .chart-title .x { border-color: #5a1410; background: linear-gradient(#e5a08f 0 50%, #c23a20 50% 75%, #d9664a); }
.plot { width: 100%; height: auto; outline: 1px solid #eef4fa; shape-rendering: crispEdges; }
.plot text { fill: #fff; font-size: 9px; white-space: pre; }
.plot text.now { fill: #000; }

.chart-tabs { margin-top: 1px; height: 20px; padding-left: 4px; }
.pager { margin-left: auto; display: flex; align-items: center; gap: 14px; padding-right: 9px; }

.tester { display: flex; margin-top: 4px; flex: 1; }
.tester aside { width: 15px; flex: none; display: flex; flex-direction: column; align-items: center; }
.tester aside button { padding: 3px; margin: 0 0 2px; }
.tester aside span { flex: 1; width: 13px; writing-mode: vertical-rl; transform: rotate(180deg); background: linear-gradient(#9db7d4, #b9d1ea); font-size: 11px; line-height: 13px; padding-top: 3px; margin-bottom: 1px; }
.tester-main { flex: 1; min-width: 0; display: flex; flex-direction: column; padding-right: 3px; }
.report-box { flex: 1; background: #fff; border-top: 1px solid #999; border-left: 1px solid #a0a0a0; }
.report { width: 100%; table-layout: fixed; border-collapse: collapse; }
.report td { height: 20px; padding: 0; line-height: 18px; border-bottom: 1px solid #c4c4c4; white-space: nowrap; }
.report td:nth-child(odd) { padding-left: 42px; }
.report td:first-child { padding-left: 8px; }
.report td:nth-child(even) { text-align: right; padding-right: 7px; }
.report tr:nth-child(odd) { background: #ebebeb; }
.c1 { width: 16%; }
.c2 { width: 17%; }
.report td.quality { padding: 0 3px 0 40px; }
.quality div { height: 17px; background: #0f0; border: 1px solid #2a7a7a; }
.quality i { display: block; width: 20px; height: 15px; background: #ff9a9a; }
.tester .tabs { height: 21px; padding-left: 4px; }
.tester .tabs button { padding: 0 9px; line-height: 16px; }

.status { height: 25px; margin-top: 4px; display: flex; align-items: center; border-top: 1px solid #a0a0a0; padding-top: 1px; }
.status span { height: 18px; border-left: 1px solid #a0a0a0; padding-left: 6px; }
.status .hint { flex: 1; border: 0; padding-left: 2px; }
.s1 { width: 116px; }
.s2 { width: 103px; }
.s3 { width: 69px; }
.status .net { display: flex; align-items: center; gap: 4px; width: 147px; padding-left: 4px; }
</style>
